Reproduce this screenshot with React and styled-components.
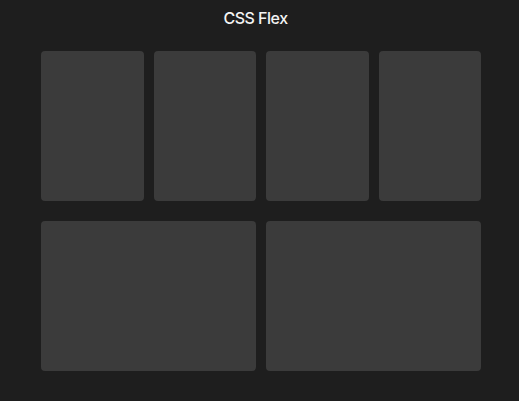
import React from "react";
import styled, { createGlobalStyle } from "styled-components";

const Global = createGlobalStyle`
  html, body { margin: 0; padding: 0; background: #1e1e1e; }
  body { font-family: "Open Sans", "DejaVu Sans", sans-serif; }
`;

const Page = styled.div`
  width: 519px;
  height: 401px;
  background: #1e1e1e;
  display: flex;
  flex-direction: column;
`;

const Header = styled.header`
  height: 36px;
  display: flex;
  align-items: center;
  justify-content: center;
  padding-right: 8px;
`;

const Title = styled.h1`
  margin: 0;
  font-family: "Inter", "Open Sans", sans-serif;
  font-size: 16px;
  font-weight: 500;
  color: #f4f4f4;
  letter-spacing: -0.5px;
`;

const Board = styled.main`
  padding: 15px 38px 0 41px;
  display: flex;
  flex-direction: column;
  gap: 20px;
`;

const Row = styled.div`
  display: flex;
  gap: 10px;
  height: 150px;
`;

const Card = styled.div`
  flex: 1;
  background: #3b3b3b;
  border-radius: 4px;
`;

export default function App() {
  return (
    <Page>
      <Global />
      <Header>
        <Title>CSS Flex</Title>
      </Header>
      <Board>
        <Row>
          <Card />
          <Card />
          <Card />
          <Card />
        </Row>
        <Row>
          <Card />
          <Card />
        </Row>
      </Board>
    </Page>
  );
}
